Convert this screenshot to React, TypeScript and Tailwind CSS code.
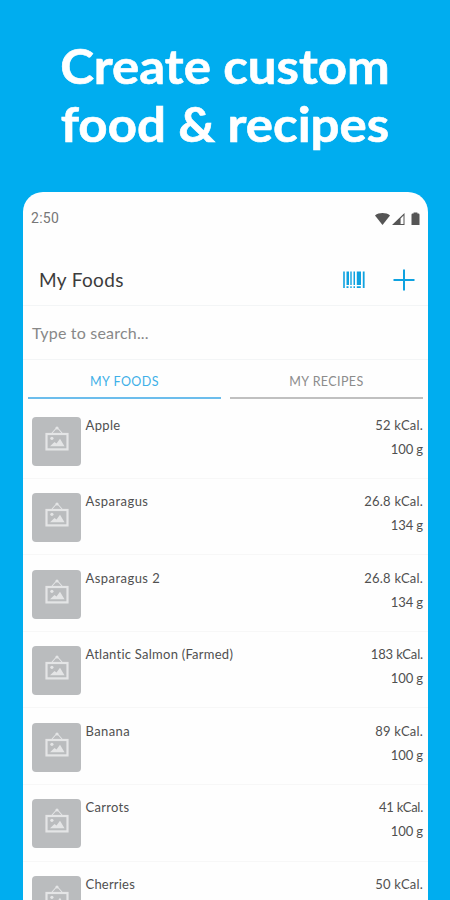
const foods = [
  { name: 'Apple', kcal: '52 kCal.', weight: '100 g', tracking: 'tracking-[0.35px]', kcalTracking: 'tracking-[0.2px]' },
  { name: 'Asparagus', kcal: '26.8 kCal.', weight: '134 g', tracking: 'tracking-[0.45px]', kcalTracking: 'tracking-[0.2px]' },
  { name: 'Asparagus 2', kcal: '26.8 kCal.', weight: '134 g', tracking: 'tracking-[0.45px]', kcalTracking: 'tracking-[0.2px]' },
  { name: 'Atlantic Salmon (Farmed)', kcal: '183 kCal.', weight: '100 g', tracking: 'tracking-[0.25px]', kcalTracking: 'tracking-[-0.15px]' },
  { name: 'Banana', kcal: '89 kCal.', weight: '100 g', tracking: 'tracking-[0.4px]', kcalTracking: 'tracking-[0.2px]' },
  { name: 'Carrots', kcal: '41 kCal.', weight: '100 g', tracking: 'tracking-[0.3px]', kcalTracking: 'tracking-[-0.25px]' },
  { name: 'Cherries', kcal: '50 kCal.', weight: '', tracking: 'tracking-[0.2px]', kcalTracking: 'tracking-[0.2px]' }
]

function StatusIcons() {
  return (
    <svg width="46" height="14" viewBox="0 0 46 14" fill="#555555">
      <path d="M0 3.4C4 0.2 11 0.2 15 3.4L7.5 13Z" />
      <path d="M17 13L29.5 1V13Z M25.6 6.4V12H28.5V3.4Z" fillRule="evenodd" />
      <path d="M38.6 0.5H42.4V1.5H43.4Q44.5 1.5 44.5 2.7V13H36.5V2.7Q36.5 1.5 37.6 1.5H38.6Z" />
    </svg>
  )
}

function BarcodeIcon() {
  return (
    <svg width="22" height="18" viewBox="0 0 22 18" fill="#0ea2e0">
      <path d="M0.2 0.5H1.8V17H0.2Z M3.5 0.5H6V14H3.5Z M7.3 0.5H8.7V14H7.3Z M10.5 0.5H12V14H10.5Z M13.8 0.5H18V14H13.8Z M19.8 0.5H21.6V17H19.8Z" />
      <path d="M3.5 15.3H5.5V17H3.5Z M7.3 15.3H8.7V17H7.3Z M10.5 15.3H12V17H10.5Z M13.8 15.3H17.8V17H13.8Z" />
    </svg>
  )
}

function PlaceholderIcon() {
  return (
    <svg width="24" height="26" viewBox="0 0 24 26" fill="none" stroke="#e4e5e6">
      <path d="M7 7L11 2.5M17 7L13 2.5" strokeWidth="1.1" />
      <circle cx="12" cy="2" r="1.6" fill="#e4e5e6" stroke="none" />
      <rect x="1.5" y="8" width="21" height="15.4" strokeWidth="2.2" />
      <circle cx="6.9" cy="12.3" r="1.6" fill="#e4e5e6" stroke="none" />
      <path d="M5 20.3L9.5 16L11.5 17.5L15 12.8L19.5 20.3Z" fill="#e4e5e6" stroke="none" />
    </svg>
  )
}

export default function App() {
  return (
    <div className="flex h-[900px] w-[450px] flex-col overflow-hidden bg-[#00adef] pt-[37px] font-['Lato',sans-serif]">
      <h1 className="scale-x-[1.085] text-center text-[47px] font-bold leading-[58px] text-white [-webkit-text-stroke:0.6px_white]">
        <span className="block">Create custom</span>
        <span className="block">food &amp; recipes</span>
      </h1>

      <div className="mt-[39px] ml-[23px] w-[405px] flex-1 overflow-hidden rounded-t-[20px] bg-[#fefefe]">
        {/* Status bar */}
        <div className="flex h-[53px] items-center justify-between pr-[7px] pl-2">
          <span className="font-['Roboto',sans-serif] text-[14px] tracking-[0.3px] text-[#777777]">2:50</span>
          <StatusIcons />
        </div>

        {/* Header */}
        <div className="flex h-[61px] items-center border-b border-[#f3f5f6] pt-2.5 pr-[13px] pl-[16px]">
          <h2 className="flex-1 text-[19px] tracking-[0.35px] text-[#3c3c3c]">My Foods</h2>
          <BarcodeIcon />
          <svg className="ml-7" width="22" height="22" viewBox="0 0 22 22" stroke="#0ea2e0" strokeWidth="2">
            <path d="M11 0.5V21.5M0.5 11H21.5" />
          </svg>
        </div>

        <div className="flex h-[54px] items-center border-b border-[#f3f5f6] pl-[9px] text-[16px] tracking-[0.2px] text-[#888888]">
          Type to search...
        </div>

        {/* Tabs */}
        <div className="flex h-[39px] gap-[9px] px-[5px] text-center text-[12.5px] leading-[43px]">
          <div className="flex-1 border-b-2 border-[#6cbdec] tracking-[0.45px] text-[#3fb0e8]">MY FOODS</div>
          <div className="flex-1 border-b-2 border-[#c0c0c0] tracking-[0.4px] text-[#8c8c8c]">MY RECIPES</div>
        </div>

        <ul className="pt-[3px]">
          {foods.map((food) => (
            <li key={food.name} className="flex h-[76.6px] border-b border-[#f7f7f7] pt-[14.5px] pr-[5px] pl-[9px] text-[13px] leading-6 text-[#505050]">
              <div className="flex size-[49px] shrink-0 justify-center rounded-[4px] bg-[#babcbe] pt-[9px]">
                <PlaceholderIcon />
              </div>
              <span className={`-mt-1 ml-[4.5px] flex-1 ${food.tracking}`}>{food.name}</span>
              <div className="-mt-1 text-right">
                <div className={food.kcalTracking}>{food.kcal}</div>
                {food.weight && <div className="tracking-[-0.1px]">{food.weight}</div>}
              </div>
            </li>
          ))}
        </ul>
      </div>
    </div>
  )
}
